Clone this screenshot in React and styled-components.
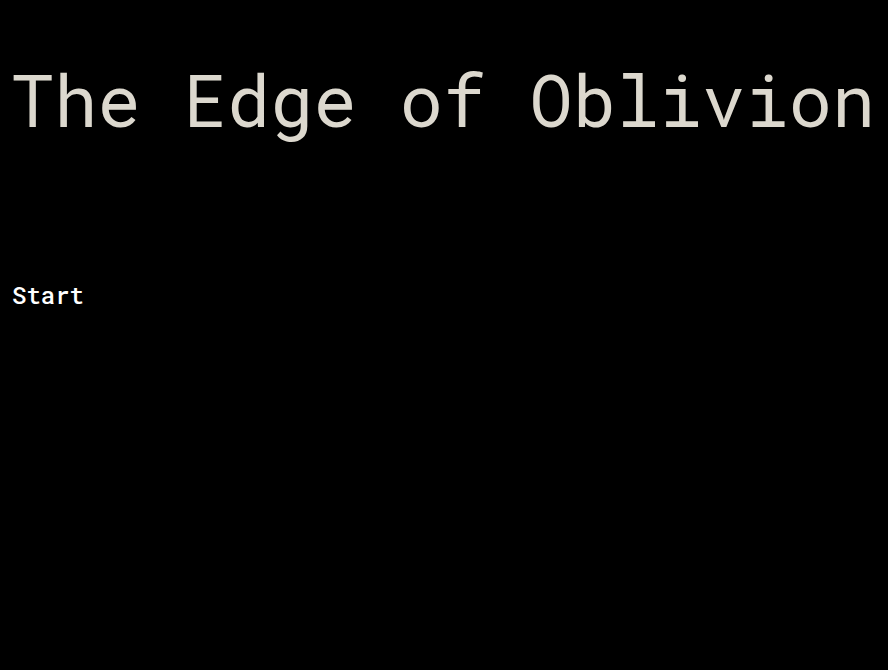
import styled, { createGlobalStyle } from "styled-components";

const GlobalStyle = createGlobalStyle`
  html, body {
    margin: 0;
    background: #000;
  }
  body {
    font-family: "Roboto Mono", "DejaVu Sans Mono", "Liberation Mono", monospace;
  }
`;

const Screen = styled.div`
  min-height: 670px;
  padding: 0 11px;
  background: #000;
  display: flex;
  flex-direction: column;
  align-items: flex-start;
`;

const Title = styled.h1`
  margin: 57px 0 0;
  font-size: 72px;
  font-weight: 400;
  line-height: 1.2;
  color: #dcd8ce;
  white-space: nowrap;
`;

const MenuButton = styled.button`
  margin-top: 138px;
  padding: 0 1px;
  background: transparent;
  border: none;
  color: #fff;
  font-family: inherit;
  font-size: 24px;
  font-weight: 500;
  line-height: 1.2;
  cursor: pointer;
`;

const App = () => {
  return (
    <>
      <GlobalStyle />
      <Screen>
        <Title>The Edge of Oblivion</Title>
        <MenuButton>Start</MenuButton>
      </Screen>
    </>
  );
};

export default App;
